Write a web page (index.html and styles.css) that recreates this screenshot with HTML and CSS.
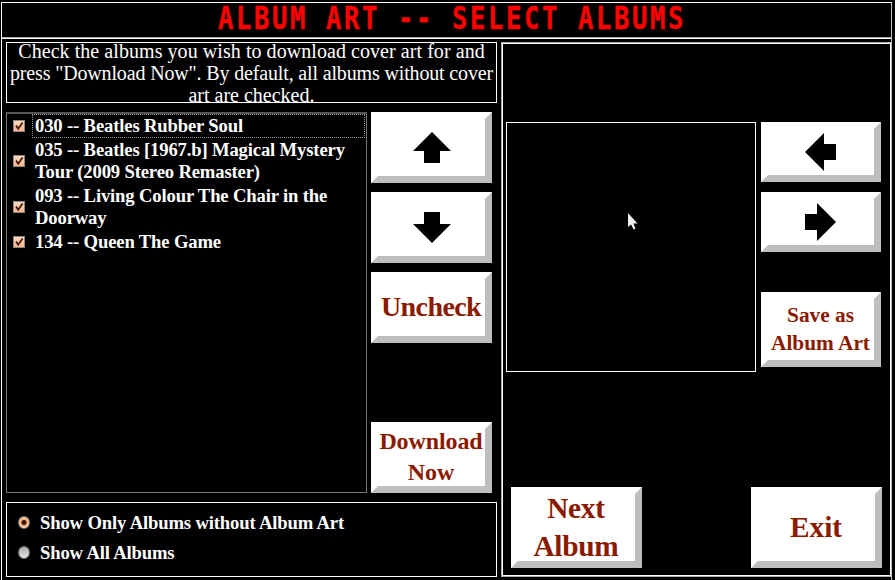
FILE: index.html
```html
<!DOCTYPE html>
<html lang="en">
<head>
<meta charset="utf-8">
<title>Album Art -- Select Albums</title>
<link rel="stylesheet" href="styles.css">
</head>
<body>
<div class="window">
  <header class="titlebar"><h1>ALBUM ART -- SELECT ALBUMS</h1></header>
  <div class="body">
    <section class="left">
      <div class="message">
        <span class="m1">Check the albums you wish to download cover art for and</span>
        <span class="m2">press "Download Now". By default, all albums without cover</span>
        <span class="m3">art are checked.</span>
      </div>
      <div class="middle">
        <ul class="list">
          <li class="item focused"><svg class="check" viewBox="0 0 10 10"><path d="M2 4.5 4.2 7.8 8.6 1.6"/></svg><span class="label">030 -- Beatles Rubber Soul</span></li>
          <li class="item two"><svg class="check" viewBox="0 0 10 10"><path d="M2 4.5 4.2 7.8 8.6 1.6"/></svg><span class="label">035 -- Beatles [1967.b] Magical Mystery<br>Tour (2009 Stereo Remaster)</span></li>
          <li class="item two"><svg class="check" viewBox="0 0 10 10"><path d="M2 4.5 4.2 7.8 8.6 1.6"/></svg><span class="label">093 -- Living Colour The Chair in the<br>Doorway</span></li>
          <li class="item"><svg class="check" viewBox="0 0 10 10"><path d="M2 4.5 4.2 7.8 8.6 1.6"/></svg><span class="label">134 -- Queen The Game</span></li>
        </ul>
        <div class="actions">
          <button class="btn" aria-label="Up"><svg class="arrow up" width="38" height="32" viewBox="0 0 38 32"><path d="M19 0 38 19H27V31H11V19H0Z"/></svg></button>
          <button class="btn" aria-label="Down"><svg class="arrow down" width="38" height="32" viewBox="0 0 38 32"><path d="M11 0H27V12H38L19 31 0 12H11Z"/></svg></button>
          <button class="btn uncheck"><span>Uncheck</span></button>
          <button class="btn download"><span>Download<br>Now</span></button>
        </div>
      </div>
      <div class="options">
        <label class="option"><span class="radio on"></span><span class="o1">Show Only Albums without Album Art</span></label>
        <label class="option"><span class="radio"></span><span class="o2">Show All Albums</span></label>
      </div>
    </section>
    <section class="right">
      <div class="viewer">
        <div class="preview">
          <svg class="cursor" width="11" height="18" viewBox="0 0 11 18"><path d="M1 0V14L4 11.5 6.6 16.5 8.5 15.6 6.4 10.5H10.5Z"/></svg>
        </div>
        <div class="side">
          <button class="btn" aria-label="Previous"><svg class="arrow prev" width="32" height="38" viewBox="0 0 32 38"><path d="M0 19 19 0V11H31V27H19V38Z"/></svg></button>
          <button class="btn" aria-label="Next"><svg class="arrow next" width="32" height="38" viewBox="0 0 32 38"><path d="M31 19 12 0V11H0V27H12V38Z"/></svg></button>
          <button class="btn save"><span>Save as<br>Album Art</span></button>
        </div>
      </div>
      <div class="footer">
        <button class="btn nextalbum"><span>Next<br>Album</span></button>
        <button class="btn exit"><span>Exit</span></button>
      </div>
    </section>
  </div>
</div>
</body>
</html>
```
FILE: styles.css
```css
* { box-sizing: border-box; }
body {
  margin: 0;
  background: #000;
  color: #fff;
  font-family: "Liberation Serif", serif;
  overflow: hidden;
}
.window {
  width: 891px;
  height: 580px;
  margin: 2px 0 0 1px;
  border: 1px solid #fff;
  border-bottom: 0;
  border-right-color: #bbb;
}
.titlebar {
  height: 36px;
  border-bottom: 1px solid #fff;
  box-shadow: inset 0 -1px #aaa;
  padding-left: 216px;
}
h1 {
  margin: 0;
  color: #f00;
  font: bold 30px/32px "DejaVu Sans Mono", monospace;
  white-space: pre;
  letter-spacing: 3.12px;
  transform: scale(.85, 1.04);
  transform-origin: 0 50%;
  -webkit-text-stroke: .4px #f00;
}
.body { display: flex; padding: 3px 0 0 4px; }
.left { width: 491px; flex: none; display: flex; flex-direction: column; }
.message {
  height: 61px;
  border: 1px solid #fff;
  font-size: 20px;
  line-height: 22px;
  display: flex;
  flex-direction: column;
  align-items: center;
  white-space: pre;
}
.message span:first-child { margin-top: -3px; }
.m1 { letter-spacing: .06px; }
.m2 { letter-spacing: -.15px; }
.middle { display: flex; justify-content: space-between; margin-top: 9px; padding-right: 5px; }
.list {
  list-style: none;
  margin: 0;
  padding: 0 1px 0 0;
  width: 361px;
  height: 381px;
  border: 1px solid #777;
  border-top: 2px solid #555;
  font-weight: bold;
  font-size: 18.67px;
  line-height: 22px;
  letter-spacing: -.16px;
}
.item { height: 24px; display: flex; align-items: center; padding-left: 6px; white-space: pre; }
.item.two { height: 46px; }
.check {
  width: 12px;
  height: 12px;
  margin: -1px 7px 0 0;
  background: linear-gradient(#ffd9bd, #ffb488);
  border: 1px solid #888;
  flex: none;
}
.check path { fill: none; stroke: #3a1508; stroke-width: 1.7; }
.label { padding-left: 3px; }
.focused .label {
  flex: 1;
  height: 24px;
  line-height: 24px;
  outline: 1px dotted #999;
  outline-offset: -1px;
}
.actions { display: grid; grid-template-rows: 71px 71px 71px 71px; row-gap: 9px; }
.btn {
  display: flex;
  align-items: center;
  justify-content: center;
  width: 121px;
  height: 100%;
  padding: 0;
  background: #fff;
  border: 7px solid;
  border-color: #fff #bebebe #bebebe #fff;
  color: #8b1a00;
  font-family: inherit;
  font-weight: bold;
  white-space: pre;
}
.btn span { margin: -2px 1px 0 0; }
.arrow { display: block; fill: #000; }
.uncheck { font-size: 28px; letter-spacing: -.6px; }
.download { height: 71px; margin-top: 70px; font-size: 24px; line-height: 31px; letter-spacing: -.1px; }
.options {
  height: 75px;
  margin-top: 9px;
  border: 1px solid #fff;
  padding: 5px 0 0 11px;
  font-weight: bold;
  font-size: 18.67px;
  letter-spacing: -.16px;
}
.option { display: flex; align-items: center; height: 30px; white-space: pre; }
.radio {
  width: 12px;
  height: 13px;
  margin: -1px 10px 0 0;
  border-radius: 50%;
  border: 1px solid #777;
  background: linear-gradient(#aaa, #e4e4e4);
}
.radio.on { background: radial-gradient(circle, #3a1508 0 2px, #f9b276 3px 4px, #ffd9bd 5px); }
.right {
  width: 390px;
  flex: none;
  height: 535px;
  margin-left: 4px;
  border: 1px solid #aaa;
  border-right-color: #fff;
  box-shadow: inset 1px 1px #fff, inset 0 -1px #fff;
  padding: 79px 0 0 4px;
}
.viewer { display: flex; gap: 5px; }
.preview { position: relative; width: 250px; height: 250px; border: 1px solid #fff; }
.cursor { position: absolute; left: 120px; top: 90px; fill: #eee; }
.side { display: grid; grid-template-rows: 60px 60px 75px; row-gap: 10px; }
.side .btn { width: 120px; }
.side .save { height: 75px; margin-top: 30px; font-size: 21.33px; line-height: 28px; }
.footer { display: flex; justify-content: space-between; margin: 115px 8px 0 5px; }
.footer .btn { width: 131px; height: 81px; font-size: 29.33px; line-height: 38px; }
.footer .nextalbum { letter-spacing: -.25px; }
```
